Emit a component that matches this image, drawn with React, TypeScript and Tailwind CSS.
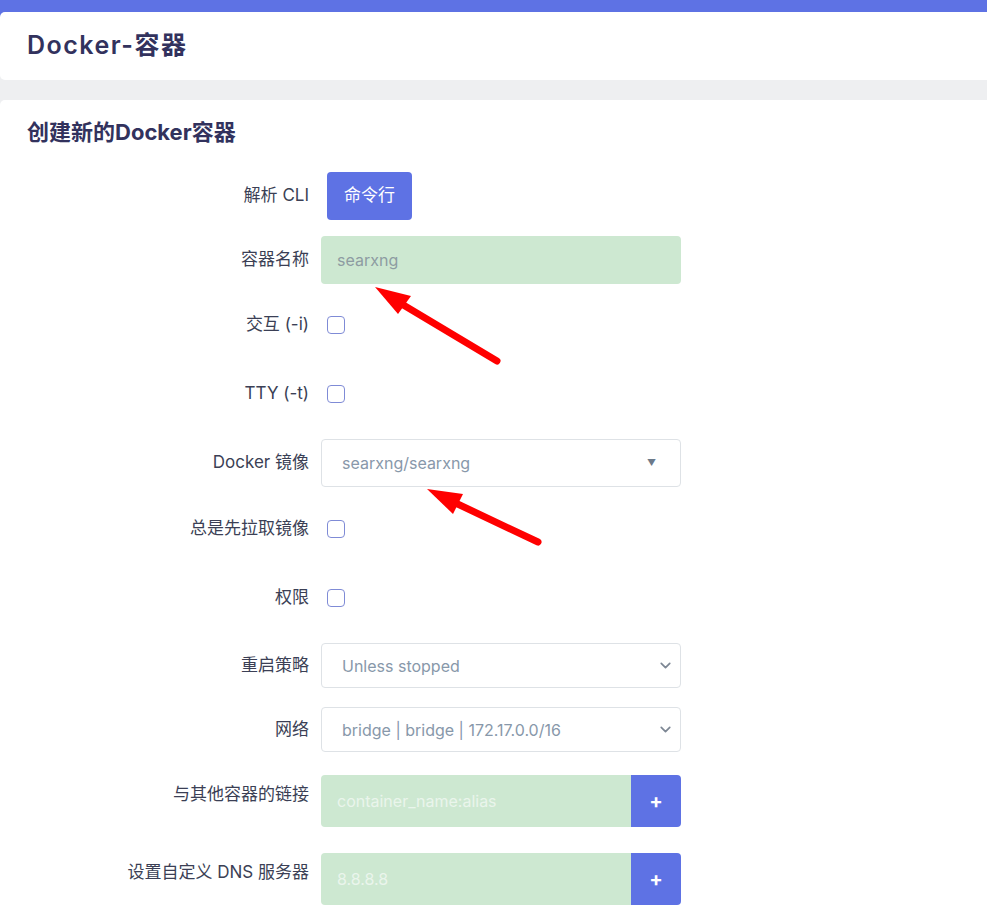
import { ChevronDown } from 'lucide-react';

const font = { fontFamily: '"Inter", "Noto Sans CJK SC", sans-serif' };

function Label({ text, className = '' }: { text: string; className?: string }) {
  return (
    <div className={`w-[309px] shrink-0 text-right text-[17px] text-[#3b3f55] ${className}`}>{text}</div>
  );
}

function CheckRow({ label, mt }: { label: string; mt: string }) {
  return (
    <div className={`flex h-[48px] items-center gap-[18px] ${mt}`}>
      <Label text={label} />
      <span className="block h-[18px] w-[18px] rounded-[4px] border border-[#7f8bd6] bg-white" />
    </div>
  );
}

function SelectRow({ label, value, mt }: { label: string; value: string; mt: string }) {
  return (
    <div className={`flex h-[45px] items-center gap-[12px] ${mt}`}>
      <Label text={label} />
      <div className="flex h-full w-[360px] items-center justify-between rounded-[4px] border border-[#dee2e6] bg-white pl-[20px] pr-[6px] text-[16px] text-[#8898aa]">
        <span>{value}</span>
        <ChevronDown size={17} strokeWidth={2.4} className="text-[#7d8794]" />
      </div>
    </div>
  );
}

function AddRow({ label, placeholder, mt }: { label: string; placeholder: string; mt: string }) {
  return (
    <div className={`flex h-[52px] gap-[12px] ${mt}`}>
      <Label text={label} className="pt-[7px]" />
      <div className="flex h-full w-[360px] overflow-hidden rounded-[4px]">
        <div className="flex flex-1 items-center bg-[#cde8d1] pl-[16px] text-[16px] text-[#eaf5ec]">{placeholder}</div>
        <div className="flex w-[50px] items-center justify-center bg-[#5e72e4] text-[20px] font-bold text-white">+</div>
      </div>
    </div>
  );
}

export default function App() {
  return (
    <div
      className="relative h-[911px] w-full overflow-hidden bg-[linear-gradient(to_bottom,#5e72e4_30px,#eeeff1_30px)]"
      style={font}
    >
      <div className="pt-[12px]">
        <div className="flex h-[68px] items-center rounded-l-[5px] bg-white pl-[27px]">
          <h1 className="text-[25px] font-semibold tracking-[1.5px] text-[#32325d]">Docker-容器</h1>
        </div>

        <div className="mt-[20px] rounded-l-[5px] bg-white pb-[20px]">
          <h2 className="pl-[27px] pt-[19px] text-[22px] font-bold leading-[26px] text-[#32325d]">创建新的Docker容器</h2>

          <div className="mt-[27px] flex h-[48px] items-center gap-[18px]">
            <Label text="解析 CLI" />
            <button className="h-[48px] w-[85px] rounded-[4px] bg-[#5e72e4] text-[17px] text-white">命令行</button>
          </div>

          <div className="mt-[16px] flex h-[48px] items-center gap-[12px]">
            <Label text="容器名称" />
            <div className="flex h-full w-[360px] items-center rounded-[4px] bg-[#cde8d1] pl-[16px] text-[16px] text-[#8d9ca2]">
              searxng
            </div>
          </div>

          <CheckRow label="交互 (-i)" mt="mt-[17px]" />
          <CheckRow label="TTY (-t)" mt="mt-[21px]" />

          <div className="mt-[21px] flex h-[48px] items-center gap-[12px]">
            <Label text="Docker 镜像" />
            <div className="flex h-full w-[360px] items-center justify-between rounded-[4px] border border-[#dee2e6] bg-white pl-[20px] pr-[24px] text-[16px] text-[#8898aa]">
              <span>searxng/searxng</span>
              <span className="text-[9px] text-[#6c7a8a]">▼</span>
            </div>
          </div>

          <CheckRow label="总是先拉取镜像" mt="mt-[18px]" />
          <CheckRow label="权限" mt="mt-[21px]" />

          <SelectRow label="重启策略" value="Unless stopped" mt="mt-[21px]" />
          <SelectRow label="网络" value="bridge | bridge | 172.17.0.0/16" mt="mt-[19px]" />

          <AddRow label="与其他容器的链接" placeholder="container_name:alias" mt="mt-[23px]" />
          <AddRow label="设置自定义 DNS 服务器" placeholder="8.8.8.8" mt="mt-[26px]" />
        </div>
      </div>

      <svg className="pointer-events-none absolute left-0 top-0" width="987" height="911" viewBox="0 0 987 911">
        <line x1="497" y1="361" x2="395" y2="300" stroke="#ff0000" strokeWidth="7" strokeLinecap="round" />
        <polygon points="375,287 411,296 398,314" fill="#ff0000" />
        <line x1="538" y1="542" x2="447" y2="499" stroke="#ff0000" strokeWidth="7" strokeLinecap="round" />
        <polygon points="427,489 463,494 453,514" fill="#ff0000" />
      </svg>
    </div>
  );
}
